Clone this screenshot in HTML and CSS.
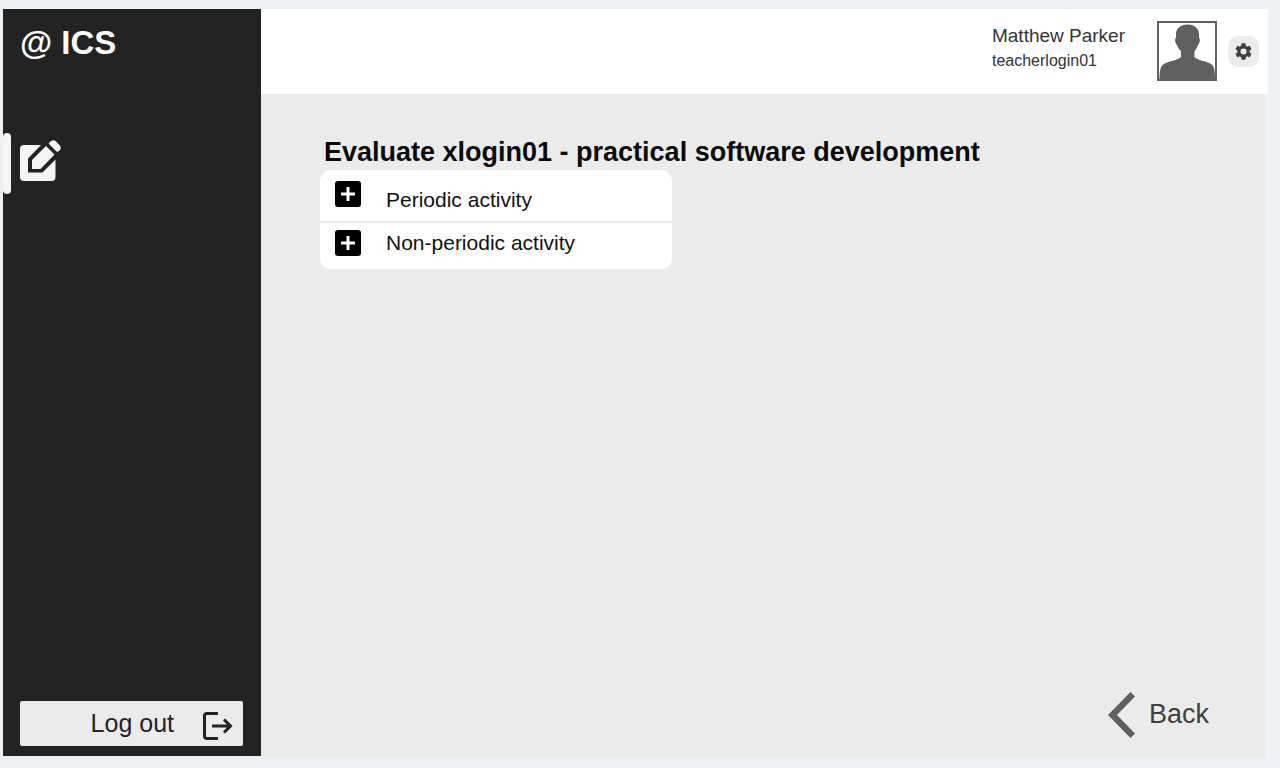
FILE: index.html
```html
<!DOCTYPE html>
<html lang="en">
<head>
<meta charset="utf-8">
<meta name="viewport" content="width=device-width, initial-scale=1">
<title>ICS - Evaluate</title>
<link rel="stylesheet" href="styles.css">
</head>
<body>
<div class="app">
  <aside class="sidebar">
    <div class="brand">@ ICS</div>
    <nav class="nav">
      <a class="nav-link" href="#evaluate" aria-label="Evaluate">
        <span class="nav-marker"></span>
        <svg class="edit-icon" viewBox="0 0 41 41" aria-hidden="true">
          <path fill="#f5f5f5" d="M4 5H21L8 18.500V32.500H22.500L35.500 19.500V37Q35.500 41 31.500 41H4Q0 41 0 37V9Q0 5 4 5Z"/>
          <path fill="#f5f5f5" d="M26 6L34.500 14.500L20.500 29H12V20Z"/>
          <path fill="#f5f5f5" d="M28.500 3.500L30.500 1.500Q33.500 -1 36 1.500L39.500 5Q42 8 39.500 10.500L37 12Z"/>
        </svg>
      </a>
    </nav>
    <button class="logout" type="button">
      <span>Log out</span>
      <svg class="logout-icon" viewBox="0 0 30 28" aria-hidden="true">
        <path fill="none" stroke="#232323" stroke-width="3" d="M15 1.500H4Q1.500 1.500 1.500 4V24Q1.500 26.500 4 26.500H15M9 14H28M21 7.500L27.500 14L21 20.500"/>
      </svg>
    </button>
  </aside>
  <div class="page">
    <header class="topbar">
      <div class="user">
        <div class="user-name">Matthew Parker</div>
        <div class="user-login">teacherlogin01</div>
      </div>
      <svg class="avatar" viewBox="0 0 60 60" role="img" aria-label="Matthew Parker">
        <path fill="#fff" stroke="#606060" stroke-width="2" d="M1 1H59V59H1Z"/>
        <path fill="#606060" d="M30.500 3.500C38 3.500 42 8 42 13V17C43.500 17.500 43 22 41 24C40 27 38.500 29 37.500 30V36C41 39.500 47 39.500 52 42C57 44 58 47 58 59H2.500C2.500 47 4 44 9 42C14 39.500 20 39.500 24 36V30C22.500 29 21 27 20 24C18 22 17.500 17.500 19 17V13C19 8 23 3.500 30.500 3.500Z"/>
      </svg>
      <button class="settings" type="button" aria-label="Settings">
        <svg class="gear-icon" viewBox="2 2 20 20" aria-hidden="true">
          <path fill="#404040" d="M19.140 12.940c.040-.300.060-.610.060-.940 0-.320-.020-.640-.070-.940l2.030-1.580c.180-.140.230-.410.120-.610l-1.920-3.320c-.120-.220-.370-.290-.590-.220l-2.390.960c-.500-.380-1.030-.700-1.620-.940l-.360-2.540c-.040-.240-.240-.410-.480-.410h-3.840c-.240 0-.430.170-.470.410l-.360 2.540c-.590.240-1.130.570-1.620.940l-2.390-.960c-.220-.080-.470 0-.590.220L2.740 8.870c-.120.210-.080.470.120.610l2.030 1.580c-.050.300-.090.630-.090.940s.020.640.070.940l-2.030 1.580c-.180.140-.230.410-.120.610l1.920 3.320c.120.220.370.290.590.220l2.390-.960c.500.380 1.030.700 1.620.940l.360 2.540c.050.240.240.410.480.410h3.840c.240 0 .440-.170.470-.410l.360-2.540c.590-.240 1.130-.560 1.620-.940l2.390.960c.220.080.470 0 .590-.220l1.920-3.320c.120-.220.070-.470-.120-.610l-2.010-1.580zM12 15.600A3.600 3.600 0 1 1 12 8.400a3.600 3.600 0 0 1 0 7.200z"/>
        </svg>
      </button>
    </header>
    <main class="content">
      <h1 class="title">Evaluate xlogin01 - practical software development</h1>
      <ul class="activities">
        <li class="activity">
          <button class="activity-button activity-button-first" type="button">
            <svg class="plus-icon" viewBox="0 0 26 26" aria-hidden="true"><rect width="26" height="26" rx="3"/><path stroke="#fff" stroke-width="3" d="M6 13H20M13 6V20"/></svg>
            <span class="activity-name">Periodic activity</span>
          </button>
        </li>
        <li class="activity">
          <button class="activity-button" type="button">
            <svg class="plus-icon" viewBox="0 0 26 26" aria-hidden="true"><rect width="26" height="26" rx="3"/><path stroke="#fff" stroke-width="3" d="M6 13H20M13 6V20"/></svg>
            <span class="activity-name">Non-periodic activity</span>
          </button>
        </li>
      </ul>
      <a class="back" href="#back">
        <svg class="back-icon" viewBox="0 0 28 46" aria-hidden="true"><path fill="#606060" d="M0 23L22.500 0L27 4.500L9 23L27 41.500L22.500 46Z"/></svg>
        <span class="back-label">Back</span>
      </a>
    </main>
  </div>
</div>
</body>
</html>
```
FILE: styles.css
```css
* {
  box-sizing: border-box;
}

body {
  margin: 0;
  background: #edf1f6;
  color: #111;
  font-family: "Liberation Sans", Arial, sans-serif;
}

button {
  border: 0;
  padding: 0;
  font-family: inherit;
  color: inherit;
  cursor: pointer;
}

svg {
  display: block;
  flex: none;
}

.app {
  display: flex;
  min-height: 100vh;
  padding: 9px 12px 10px 3px;
}

.sidebar {
  display: flex;
  flex-direction: column;
  flex: none;
  width: 258px;
  margin-bottom: 2px;
  padding-bottom: 10px;
  background: #232323;
}

.brand {
  padding: 14px 17px;
  color: #fff;
  font-size: 33px;
  font-weight: bold;
  line-height: 40px;
}

.nav {
  flex: 1;
  padding-top: 56px;
}

.nav-link {
  display: flex;
  gap: 9px;
  width: 60px;
}

.nav-marker {
  width: 8px;
  height: 61px;
  border-radius: 4px;
  background: #f5f5f5;
}

.edit-icon {
  width: 41px;
  height: 41px;
  margin-top: 7px;
}

.logout {
  display: flex;
  align-items: center;
  justify-content: flex-end;
  gap: 29px;
  height: 45px;
  margin: 0 18px 0 17px;
  padding-right: 10px;
  border-radius: 2px;
  background: #ebebeb;
  color: #232323;
  font-size: 25px;
}

.logout-icon {
  width: 30px;
  height: 28px;
  margin-top: 4px;
}

.page {
  display: flex;
  flex-direction: column;
  flex: 1;
}

.topbar {
  display: flex;
  align-items: center;
  justify-content: flex-end;
  min-height: 85px;
  padding-right: 9px;
  background: #fff;
}

.user {
  margin: 0 32px 7px 0;
  color: #333;
}

.user-name {
  font-size: 19px;
  line-height: 26px;
}

.user-login {
  font-size: 16px;
  line-height: 24px;
}

.avatar {
  width: 60px;
  height: 60px;
  margin: 0 11px 2px 0;
}

.settings {
  display: grid;
  place-items: center;
  width: 31px;
  height: 31px;
  border-radius: 10px;
  background: #ebebeb;
}

.gear-icon {
  width: 17px;
  height: 17px;
}

.content {
  display: flex;
  flex-direction: column;
  flex: 1;
  align-items: flex-start;
  margin-right: 3px;
  padding: 42px 56px 20px 59px;
  background: #ebebeb;
}

.title {
  margin: 0 0 2px 4px;
  color: #0a0a0a;
  font-size: 27px;
  line-height: 32px;
}

.activities {
  width: 352px;
  max-width: 100%;
  margin: 0;
  padding: 0;
  overflow: hidden;
  border-radius: 10px;
  background: #fff;
  list-style: none;
}

.activity + .activity {
  border-top: 2px solid #ebebeb;
}

.activity-button {
  display: flex;
  align-items: flex-start;
  gap: 25px;
  width: 100%;
  min-height: 46px;
  padding: 7px 15px;
  background: none;
  font-size: 21px;
  line-height: 26px;
}

.activity-button-first {
  min-height: 51px;
  padding-top: 11px;
}

.activity-button-first .activity-name {
  padding-top: 6px;
}

.plus-icon {
  width: 26px;
  height: 26px;
}

.back {
  display: flex;
  align-items: flex-start;
  gap: 13px;
  margin: auto 0 0 auto;
  color: #404040;
  font-size: 27px;
  line-height: 44px;
  text-decoration: none;
}

.back-icon {
  width: 28px;
  height: 46px;
}
```
